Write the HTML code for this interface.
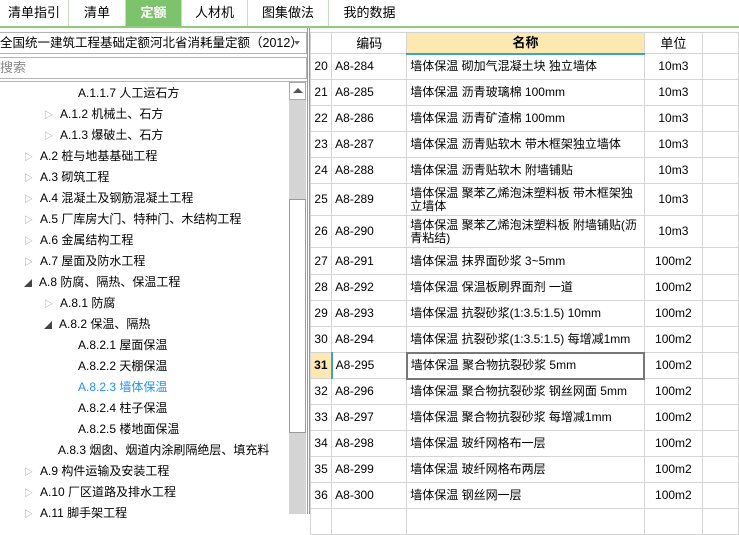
<!DOCTYPE html>
<html><head><meta charset="utf-8"><style>
*{margin:0;padding:0;box-sizing:border-box}
body{width:739px;height:514px;overflow:hidden;background:#fff;font-family:"Liberation Sans","Noto Sans CJK SC",sans-serif;font-size:12px;color:#000;position:relative}
.abs{position:absolute}
.tab{position:absolute;top:0;height:26px;line-height:26px;text-align:center;font-size:13px;border-right:1px solid #c8dcc0}
.tree div{position:absolute;height:21px;line-height:21px;font-size:12px;white-space:nowrap}
.tri{color:#999;font-size:9px;margin-right:7px}
.trd{color:#444;font-size:8px;margin-right:7px}
table{border-collapse:collapse;position:absolute;left:310px;top:32px;table-layout:fixed}
td{border:1px solid #d4d4d4;padding:0 3px;font-size:12px;line-height:13px;overflow:hidden;white-space:nowrap}
td.n{text-align:center;padding:0}
td.u{text-align:center}
td.w{white-space:normal}
</style></head><body>
<div class="tab" style="left:0;width:69px">清单指引</div>
<div class="tab" style="left:69px;width:57px">清单</div>
<div class="tab" style="left:126px;width:56px;background:#7dc36b;color:#fff;font-weight:bold">定额</div>
<div class="tab" style="left:182px;width:66px">人材机</div>
<div class="tab" style="left:248px;width:81px">图集做法</div>
<div class="tab" style="left:329px;width:81px;border-right:none">我的数据</div>
<div class="abs" style="left:0;top:26px;width:739px;height:2px;background:#8ccc7a"></div>

<div class="abs" style="left:-2px;top:32px;width:309px;height:22px;border:1px solid #b4b4b4;line-height:20px;font-size:12.5px;padding-left:1px;white-space:nowrap;overflow:hidden">全国统一建筑工程基础定额河北省消耗量定额（2012）</div>
<div class="abs" style="left:294px;top:41px;width:0;height:0;border-left:3px solid transparent;border-right:3px solid transparent;border-top:4px solid #666"></div>
<div class="abs" style="left:-2px;top:57px;width:309px;height:22px;border:1px solid #b4b4b4;line-height:20px;font-size:13px;color:#888;padding-left:1px">搜索</div>

<div class="abs" style="left:0;top:81px;width:307px;height:433px;border-top:1px solid #b4b4b4"></div>
<div class="tree">
<div style="left:78px;top:83px">A.1.1.7 人工运石方</div>
<div style="left:44px;top:104px"><span class="tri">▷</span>A.1.2 机械土、石方</div>
<div style="left:44px;top:125px"><span class="tri">▷</span>A.1.3 爆破土、石方</div>
<div style="left:24px;top:146px"><span class="tri">▷</span>A.2 桩与地基基础工程</div>
<div style="left:24px;top:167px"><span class="tri">▷</span>A.3 砌筑工程</div>
<div style="left:24px;top:188px"><span class="tri">▷</span>A.4 混凝土及钢筋混凝土工程</div>
<div style="left:24px;top:209px"><span class="tri">▷</span>A.5 厂库房大门、特种门、木结构工程</div>
<div style="left:24px;top:230px"><span class="tri">▷</span>A.6 金属结构工程</div>
<div style="left:24px;top:251px"><span class="tri">▷</span>A.7 屋面及防水工程</div>
<div style="left:24px;top:272px"><span class="trd">◢</span>A.8 防腐、隔热、保温工程</div>
<div style="left:44px;top:293px"><span class="tri">▷</span>A.8.1 防腐</div>
<div style="left:44px;top:314px"><span class="trd">◢</span>A.8.2 保温、隔热</div>
<div style="left:78px;top:335px">A.8.2.1 屋面保温</div>
<div style="left:78px;top:356px">A.8.2.2 天棚保温</div>
<div style="left:78px;top:377px;color:#1e90ff">A.8.2.3 墙体保温</div>
<div style="left:78px;top:398px">A.8.2.4 柱子保温</div>
<div style="left:78px;top:419px">A.8.2.5 楼地面保温</div>
<div style="left:58px;top:440px">A.8.3 烟囱、烟道内涂刷隔绝层、填充料</div>
<div style="left:24px;top:461px"><span class="tri">▷</span>A.9 构件运输及安装工程</div>
<div style="left:24px;top:482px"><span class="tri">▷</span>A.10 厂区道路及排水工程</div>
<div style="left:24px;top:503px"><span class="tri">▷</span>A.11 脚手架工程</div>
</div>
<!-- scrollbar -->
<div class="abs" style="left:289px;top:82px;width:17px;height:432px;background:#d4d4d4"></div>
<div class="abs" style="left:289px;top:82px;width:17px;height:18px;background:#fff;border:1px solid #aaa"></div>
<div class="abs" style="left:293px;top:88px;width:0;height:0;border-left:5px solid transparent;border-right:5px solid transparent;border-bottom:5px solid #555"></div>
<div class="abs" style="left:289px;top:199px;width:17px;height:234px;background:#fff;border:1px solid #999"></div>
<div class="abs" style="left:307px;top:28px;width:3px;height:486px;background:#fff;border-left:1px solid #999;border-right:1px solid #999"></div>

<table>
<colgroup><col style="width:22px"><col style="width:79px"><col style="width:239px"><col style="width:60px"><col style="width:40px"></colgroup>
<tr style="height:21px"><td></td><td class="n" style="font-size:13px">编码</td><td class="n" style="background:#fde9b0;font-weight:bold;font-size:13px;border-bottom:2px solid #3ba0d8">名称</td><td class="n" style="font-size:13px">单位</td><td></td></tr>
<tr style="height:26px"><td class="n">20</td><td>A8-284</td><td>墙体保温 砌加气混凝土块 独立墙体</td><td class="u">10m3</td><td></td></tr>
<tr style="height:26px"><td class="n">21</td><td>A8-285</td><td>墙体保温 沥青玻璃棉 100mm</td><td class="u">10m3</td><td></td></tr>
<tr style="height:26px"><td class="n">22</td><td>A8-286</td><td>墙体保温 沥青矿渣棉 100mm</td><td class="u">10m3</td><td></td></tr>
<tr style="height:26px"><td class="n">23</td><td>A8-287</td><td>墙体保温 沥青贴软木 带木框架独立墙体</td><td class="u">10m3</td><td></td></tr>
<tr style="height:26px"><td class="n">24</td><td>A8-288</td><td>墙体保温 沥青贴软木 附墙铺贴</td><td class="u">10m3</td><td></td></tr>
<tr style="height:32px"><td class="n">25</td><td>A8-289</td><td class="w">墙体保温 聚苯乙烯泡沫塑料板 带木框架独立墙体</td><td class="u">10m3</td><td></td></tr>
<tr style="height:32px"><td class="n">26</td><td>A8-290</td><td class="w">墙体保温 聚苯乙烯泡沫塑料板 附墙铺贴(沥青粘结)</td><td class="u">10m3</td><td></td></tr>
<tr style="height:27px"><td class="n">27</td><td>A8-291</td><td>墙体保温 抹界面砂浆 3~5mm</td><td class="u">100m2</td><td></td></tr>
<tr style="height:26px"><td class="n">28</td><td>A8-292</td><td>墙体保温 保温板刷界面剂 一道</td><td class="u">100m2</td><td></td></tr>
<tr style="height:26px"><td class="n">29</td><td>A8-293</td><td>墙体保温 抗裂砂浆(1:3.5:1.5) 10mm</td><td class="u">100m2</td><td></td></tr>
<tr style="height:26px"><td class="n">30</td><td>A8-294</td><td>墙体保温 抗裂砂浆(1:3.5:1.5) 每增减1mm</td><td class="u">100m2</td><td></td></tr>
<tr style="height:26px"><td class="n" style="background:#fde9b0;font-weight:bold;border-right:2px solid #3ba0d8">31</td><td>A8-295</td><td style="border:2px solid #777">墙体保温 聚合物抗裂砂浆 5mm</td><td class="u">100m2</td><td></td></tr>
<tr style="height:26px"><td class="n">32</td><td>A8-296</td><td>墙体保温 聚合物抗裂砂浆 钢丝网面 5mm</td><td class="u">100m2</td><td></td></tr>
<tr style="height:26px"><td class="n">33</td><td>A8-297</td><td>墙体保温 聚合物抗裂砂浆 每增减1mm</td><td class="u">100m2</td><td></td></tr>
<tr style="height:26px"><td class="n">34</td><td>A8-298</td><td>墙体保温 玻纤网格布一层</td><td class="u">100m2</td><td></td></tr>
<tr style="height:26px"><td class="n">35</td><td>A8-299</td><td>墙体保温 玻纤网格布两层</td><td class="u">100m2</td><td></td></tr>
<tr style="height:26px"><td class="n">36</td><td>A8-300</td><td>墙体保温 钢丝网一层</td><td class="u">100m2</td><td></td></tr>
<tr style="height:26px"><td class="n"></td><td></td><td></td><td></td><td></td></tr>
</table>
</body></html>
